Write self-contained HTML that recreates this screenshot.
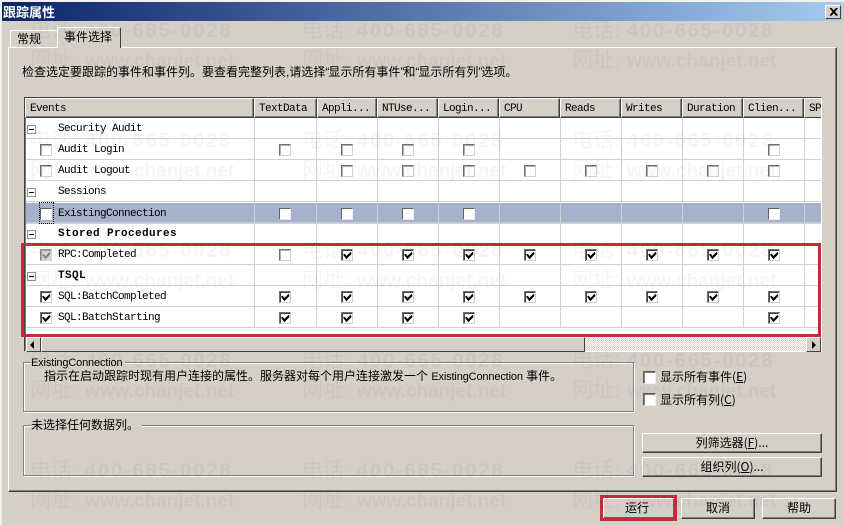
<!DOCTYPE html>
<html lang="zh-CN"><head><meta charset="utf-8"><title>跟踪属性</title>
<style>
html,body{margin:0;padding:0;width:844px;height:525px;overflow:hidden;background:#d4d0c8}
body{position:relative;font:12px/14px "WenQuanYi Zen Hei","Noto Sans CJK SC",sans-serif;color:#000}
div,span{position:absolute;box-sizing:border-box;white-space:nowrap}
#title{left:2px;top:2px;width:840px;height:19px;background:linear-gradient(90deg,#0a246a,#a6caf0);color:#fff;font-weight:bold;font-size:13px;line-height:19px;padding-left:1px}
#close{left:825px;top:5px;width:16px;height:14px;background:#d4d0c8;border:1px solid;border-color:#fff #404040 #404040 #fff}
#panel{left:8px;top:47px;width:829px;height:445px;border:1px solid;border-color:#fff #404040 #404040 #fff;box-shadow:inset -1px -1px 0 #808080}
.tab{border:1px solid;border-color:#fff #404040 transparent #fff;border-bottom:0;border-radius:2px 2px 0 0;text-align:center;background:#d4d0c8}
#t1{left:10px;top:30px;width:47px;height:17px;line-height:14px;padding-top:1px;border-right:0;text-align:left;padding-left:6px}
#t2{left:57px;top:27px;width:64px;height:21px;line-height:17px;z-index:2;padding-right:2px}
#frame{left:24px;top:97px;width:798px;height:255px;background:#fff;border:1px solid;border-color:#404040 #fff #fff #404040;box-shadow:inset 1px 1px 0 #808080}
.h{top:98px;height:20px;background:#d4d0c8;border:1px solid;border-color:#fff #404040 #404040 #fff;box-shadow:inset -1px -1px 0 #808080;font:11px/20px "Liberation Mono",monospace;letter-spacing:-.6px;padding-left:4px;overflow:hidden}
.vl{top:118px;height:210px;width:1px;background:#d0d0d0}
.row{left:26px;width:795px;height:21px;border-bottom:1px solid #d0d0d0}
.n{left:32px;top:1px;font:11px/20px "Liberation Mono",monospace;letter-spacing:-.6px}
.b{font-weight:bold;letter-spacing:.4px}
.m{left:1px;top:7px;width:9px;height:9px;border:1px solid #909090;background:#fff}
.m:after{content:"";position:absolute;left:1px;top:3px;width:5px;height:1px;background:#000}
.c{top:5px;width:12px;height:12px;background:#fff;border:1px solid;border-color:#707070 #d4d0c8 #d4d0c8 #707070;box-shadow:inset 1px 1px 0 #b0b0b0}
.k{box-shadow:inset 1px 1px 0 #404040}
.k:after{content:"";position:absolute;left:1px;top:1px;width:9px;height:9px;background:#000;clip-path:polygon(0 40%,20% 30%,38% 55%,85% 8%,95% 32%,38% 92%)}
.e{left:14px;top:5px}.x1{left:253px}.x2{left:315px}.x3{left:376px}.x4{left:437px}.x5{left:498px}.x6{left:559px}.x7{left:620px}.x8{left:681px}.x9{left:742px}
.sel{background:#a6b1cb;height:20px;border-bottom:1px solid #c4c8d4}
.sel .c{border-color:#606060 #eee #eee #606060;box-shadow:none}
.dis{background:#d8d8d8;border-color:#909090 #d4d0c8 #d4d0c8 #909090;box-shadow:inset 1px 1px 0 #a0a0a0}
.dis:after{content:"";position:absolute;left:1px;top:1px;width:9px;height:9px;background:#888;clip-path:polygon(0 40%,20% 30%,38% 55%,85% 8%,95% 32%,38% 92%)}
#focus{left:39px;top:202px;width:15px;height:22px;border:1px dotted #000}
.sb{top:337px;height:15px;background:#d4d0c8;border:1px solid;border-color:#fff #404040 #404040 #fff}
#track{left:585px;top:337px;width:221px;height:14px;background:repeating-conic-gradient(#d4d0c8 0 25%,#fff 0 50%) 0 0/2px 2px}
.tri{width:0;height:0;top:3px;border-style:solid;border-color:transparent}
#red{left:21px;top:243px;width:800px;height:94px;border:3px solid #c22e38;z-index:5}
.gb{left:23px;width:611px;border:1px solid #808080;box-shadow:1px 1px 0 #fff,inset 1px 1px 0 #fff}
.gl{left:31px;background:#d4d0c8;padding:0 3px 0 0;z-index:1}
.cb{left:643px;width:13px;height:13px;background:#fff;border:1px solid;border-color:#606060 #f0f0f0 #f0f0f0 #606060;box-shadow:inset 1px 1px 0 #808080}
.btn{background:#d4d0c8;border:1px solid;border-color:#fff #404040 #404040 #fff;box-shadow:inset -1px -1px 0 #808080;text-align:center}
u{text-decoration:underline}
span.q{position:static;letter-spacing:-1px}
.wm{font:bold 20px/24px "Liberation Sans","Noto Sans CJK SC",sans-serif;color:rgba(0,0,0,.04);z-index:10}
.wm span{position:static}
.wm b{display:inline-block;width:55px;font-size:21px;font-weight:normal}
.p span{letter-spacing:1.9px}
.w span{font-size:19px}
</style></head><body>
<div style="left:0;top:0;width:844px;height:2px;background:#f4f2ee"></div>
<div style="left:0;top:0;width:2px;height:525px;background:#f0eee8"></div>
<div id="title">跟踪属性</div>
<div id="close"><svg style="position:absolute;left:3px;top:2px" width="9" height="8" viewBox="0 0 9 8"><path d="M1 0L7.500 7.500M2 0L8.500 7.500M7.500 0L1 7.500M8.500 0L2 7.500" stroke="#000" stroke-width="1" fill="none"/></svg></div>
<div id="panel"></div>
<div class="tab" id="t1">常规</div>
<div class="tab" id="t2">事件选择</div>
<div style="left:22px;top:65px;font-family:'Liberation Sans','WenQuanYi Zen Hei',sans-serif">检查选定要跟踪的事件和事件列。要查看完整列表,请选择<span class="q">“</span>显示所有事件<span class="q">”</span>和<span class="q">“</span>显示所有列<span class="q">”</span>选项。</div>

<div id="frame"></div>
<div class="h" style="left:25px;width:229px">Events</div>
<div class="h" style="left:254px;width:63px">TextData</div>
<div class="h" style="left:317px;width:60px">Appli...</div>
<div class="h" style="left:377px;width:61px">NTUse...</div>
<div class="h" style="left:438px;width:61px">Login...</div>
<div class="h" style="left:499px;width:61px">CPU</div>
<div class="h" style="left:560px;width:61px">Reads</div>
<div class="h" style="left:621px;width:61px">Writes</div>
<div class="h" style="left:682px;width:61px">Duration</div>
<div class="h" style="left:743px;width:61px">Clien...</div>
<div class="h" style="left:804px;width:17px;border-right:0;box-shadow:none">SP</div>

<div class="row" style="top:118px"><div class="m"></div><div class="n">Security Audit</div></div>
<div class="row" style="top:139px"><div class="c e"></div><div class="n">Audit Login</div><div class="c x1"></div><div class="c x2"></div><div class="c x3"></div><div class="c x4"></div><div class="c x9"></div></div>
<div class="row" style="top:160px"><div class="c e"></div><div class="n">Audit Logout</div><div class="c x2"></div><div class="c x3"></div><div class="c x4"></div><div class="c x5"></div><div class="c x6"></div><div class="c x7"></div><div class="c x8"></div><div class="c x9"></div></div>
<div class="row" style="top:181px"><div class="m"></div><div class="n">Sessions</div></div>
<div class="row" style="top:202px;height:22px;background:#fff"></div>
<div class="row sel" style="top:203px"><div class="c e"></div><div class="n">ExistingConnection</div><div class="c x1"></div><div class="c x2"></div><div class="c x3"></div><div class="c x4"></div><div class="c x9"></div></div>
<div class="row" style="top:223px"><div class="m"></div><div class="n b">Stored Procedures</div></div>
<div class="row" style="top:244px"><div class="c e dis"></div><div class="n">RPC:Completed</div><div class="c x1"></div><div class="c k x2"></div><div class="c k x3"></div><div class="c k x4"></div><div class="c k x5"></div><div class="c k x6"></div><div class="c k x7"></div><div class="c k x8"></div><div class="c k x9"></div></div>
<div class="row" style="top:265px"><div class="m"></div><div class="n b">TSQL</div></div>
<div class="row" style="top:286px"><div class="c k e"></div><div class="n">SQL:BatchCompleted</div><div class="c k x1"></div><div class="c k x2"></div><div class="c k x3"></div><div class="c k x4"></div><div class="c k x5"></div><div class="c k x6"></div><div class="c k x7"></div><div class="c k x8"></div><div class="c k x9"></div></div>
<div class="row" style="top:307px"><div class="c k e"></div><div class="n">SQL:BatchStarting</div><div class="c k x1"></div><div class="c k x2"></div><div class="c k x3"></div><div class="c k x4"></div><div class="c k x9"></div></div>

<div class="vl" style="left:254px"></div><div class="vl" style="left:316px"></div><div class="vl" style="left:377px"></div><div class="vl" style="left:438px"></div><div class="vl" style="left:499px"></div><div class="vl" style="left:560px"></div><div class="vl" style="left:621px"></div><div class="vl" style="left:682px"></div><div class="vl" style="left:743px"></div><div class="vl" style="left:804px"></div>
<div id="focus"></div>

<div id="track"></div>
<div class="sb" style="left:26px;width:15px"><div class="tri" style="left:3px;border-width:4px 4px 4px 0;border-right-color:#000"></div></div>
<div class="sb" style="left:41px;width:544px"></div>
<div class="sb" style="left:806px;width:15px"><div class="tri" style="left:5px;border-width:4px 0 4px 4px;border-left-color:#000"></div></div>
<div id="red"></div>

<div class="gb" style="top:362px;height:50px"></div>
<div class="gl" style="top:356px;font:11px/14px 'Liberation Sans',sans-serif;letter-spacing:-.15px">ExistingConnection</div>
<div style="left:44px;top:369px;font-family:'Liberation Sans','WenQuanYi Zen Hei',sans-serif">指示在启动跟踪时现有用户连接的属性。服务器对每个用户连接激发一个 <span style="position:static;font:11px 'Liberation Sans',sans-serif;letter-spacing:-.15px">ExistingConnection</span> 事件。</div>
<div class="gb" style="top:425px;height:51px"></div>
<div class="gl" style="top:418px">未选择任何数据列。</div>

<div class="cb" style="top:371px"></div><div style="left:660px;top:370px">显示所有事件(<u>E</u>)</div>
<div class="cb" style="top:393px"></div><div style="left:660px;top:393px">显示所有列(<u>C</u>)</div>
<div class="btn" style="left:642px;top:433px;width:180px;height:20px;line-height:17px">列筛选器(<u>F</u>)...</div>
<div class="btn" style="left:642px;top:457px;width:180px;height:20px;line-height:17px">组织列(<u>O</u>)...</div>
<div class="btn" style="left:600px;top:495px;width:77px;height:26px;line-height:19px;padding-right:3px;border:3px solid #c22e38;box-shadow:inset 1px 1px 0 #fff,inset -1px -1px 0 #606060">运行</div>
<div class="btn" style="left:681px;top:498px;width:74px;height:21px;line-height:18px">取消</div>
<div class="btn" style="left:762px;top:498px;width:74px;height:21px;line-height:18px">帮助</div>

<div class="wm p" style="left:30px;top:19px"><b>电话:</b><span>400-665-0028</span></div><div class="wm p" style="left:302px;top:19px"><b>电话:</b><span>400-665-0028</span></div><div class="wm p" style="left:572px;top:19px"><b>电话:</b><span>400-665-0028</span></div>
<div class="wm w" style="left:30px;top:49px"><b>网址:</b><span>www.chanjet.net</span></div><div class="wm w" style="left:302px;top:49px"><b>网址:</b><span>www.chanjet.net</span></div><div class="wm w" style="left:572px;top:49px"><b>网址:</b><span>www.chanjet.net</span></div>
<div class="wm p" style="left:30px;top:129px"><b>电话:</b><span>400-665-0028</span></div><div class="wm p" style="left:302px;top:129px"><b>电话:</b><span>400-665-0028</span></div><div class="wm p" style="left:572px;top:129px"><b>电话:</b><span>400-665-0028</span></div>
<div class="wm w" style="left:30px;top:159px"><b>网址:</b><span>www.chanjet.net</span></div><div class="wm w" style="left:302px;top:159px"><b>网址:</b><span>www.chanjet.net</span></div><div class="wm w" style="left:572px;top:159px"><b>网址:</b><span>www.chanjet.net</span></div>
<div class="wm p" style="left:30px;top:239px"><b>电话:</b><span>400-665-0028</span></div><div class="wm p" style="left:302px;top:239px"><b>电话:</b><span>400-665-0028</span></div><div class="wm p" style="left:572px;top:239px"><b>电话:</b><span>400-665-0028</span></div>
<div class="wm w" style="left:30px;top:269px"><b>网址:</b><span>www.chanjet.net</span></div><div class="wm w" style="left:302px;top:269px"><b>网址:</b><span>www.chanjet.net</span></div><div class="wm w" style="left:572px;top:269px"><b>网址:</b><span>www.chanjet.net</span></div>
<div class="wm p" style="left:30px;top:349px"><b>电话:</b><span>400-665-0028</span></div><div class="wm p" style="left:302px;top:349px"><b>电话:</b><span>400-665-0028</span></div><div class="wm p" style="left:572px;top:349px"><b>电话:</b><span>400-665-0028</span></div>
<div class="wm w" style="left:30px;top:379px"><b>网址:</b><span>www.chanjet.net</span></div><div class="wm w" style="left:302px;top:379px"><b>网址:</b><span>www.chanjet.net</span></div><div class="wm w" style="left:572px;top:379px"><b>网址:</b><span>www.chanjet.net</span></div>
<div class="wm p" style="left:30px;top:459px"><b>电话:</b><span>400-665-0028</span></div><div class="wm p" style="left:302px;top:459px"><b>电话:</b><span>400-665-0028</span></div><div class="wm p" style="left:572px;top:459px"><b>电话:</b><span>400-665-0028</span></div>
<div class="wm w" style="left:30px;top:489px"><b>网址:</b><span>www.chanjet.net</span></div><div class="wm w" style="left:302px;top:489px"><b>网址:</b><span>www.chanjet.net</span></div><div class="wm w" style="left:572px;top:489px"><b>网址:</b><span>www.chanjet.net</span></div>
</body></html>
